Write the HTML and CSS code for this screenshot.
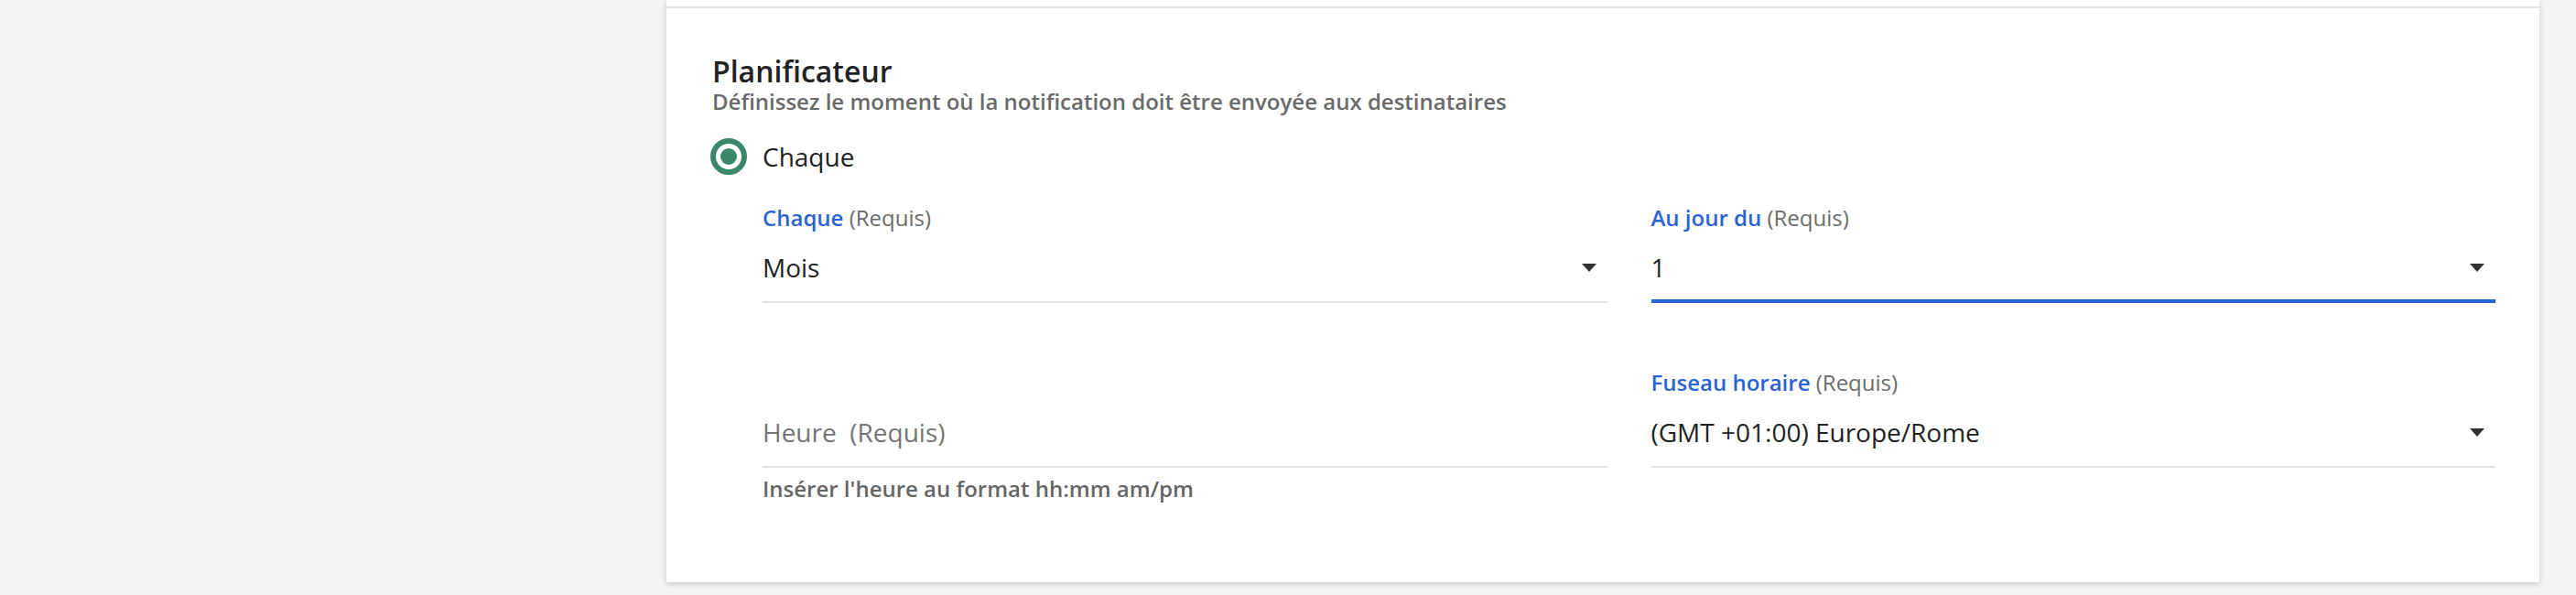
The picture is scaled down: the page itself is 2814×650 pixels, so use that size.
FILE: index.html
```html
<!DOCTYPE html>
<html lang="fr">
<head>
<meta charset="utf-8">
<title>Planificateur</title>
<link rel="stylesheet" href="styles.css">
</head>
<body>
<div class="page">
  <div class="card">
    <div class="card-prev"></div>
    <section class="section">
      <h2 class="title">Planificateur</h2>
      <p class="subtitle">Définissez le moment où la notification doit être envoyée aux destinataires</p>
      <div class="radio-row">
        <span class="radio"><span class="radio-dot"></span></span>
        <span class="radio-label">Chaque</span>
      </div>
      <div class="fields">
        <div class="field">
          <div class="label"><span class="label-name">Chaque</span> <span class="label-req">(Requis)</span></div>
          <div class="input">
            <span class="value">Mois</span>
            <svg class="caret" width="16" height="9" viewBox="0 0 16 9"><path d="M0 0H16L8 9Z" fill="#333"/></svg>
          </div>
        </div>
        <div class="field">
          <div class="label"><span class="label-name">Au jour du</span> <span class="label-req">(Requis)</span></div>
          <div class="input input--focus">
            <span class="value">1</span>
            <svg class="caret" width="16" height="9" viewBox="0 0 16 9"><path d="M0 0H16L8 9Z" fill="#333"/></svg>
          </div>
        </div>
        <div class="field">
          <div class="label label--empty"></div>
          <div class="input">
            <span class="value value--placeholder">Heure&nbsp; (Requis)</span>
          </div>
          <div class="helper">Insérer l'heure au format hh:mm am/pm</div>
        </div>
        <div class="field">
          <div class="label"><span class="label-name">Fuseau horaire</span> <span class="label-req">(Requis)</span></div>
          <div class="input">
            <span class="value">(GMT +01:00) Europe/Rome</span>
            <svg class="caret" width="16" height="9" viewBox="0 0 16 9"><path d="M0 0H16L8 9Z" fill="#333"/></svg>
          </div>
        </div>
      </div>
    </section>
  </div>
</div>
</body>
</html>
```

FILE: styles.css
```css
* { box-sizing: border-box; }
html, body { margin: 0; padding: 0; }
body {
  background: #f4f4f4;
  font-family: "Open Sans", "Noto Sans", sans-serif;
  color: #222;
  height: 650px;
  overflow: hidden;
}
.page { padding-left: 728px; }
.card {
  width: 2046px;
  background: #fff;
  box-shadow: 0 2px 6px rgba(0,0,0,0.18);
}
.card-prev { height: 7px; }
.section {
  border-top: 2px solid #e4e4e4;
  padding: 49px 48px 89px 50px;
}
.title {
  margin: 0;
  font-size: 32px;
  line-height: 40px;
  font-weight: 600;
  color: #222;
}
.subtitle {
  margin: 0;
  font-size: 24px;
  line-height: 26px;
  font-weight: 600;
  color: #6a6a6a;
}
.radio-row {
  margin-top: 27px;
  height: 40px;
  display: flex;
  align-items: center;
  margin-left: -2px;
}
.radio {
  width: 40px;
  height: 40px;
  border-radius: 50%;
  border: 6px solid #3b8868;
  display: flex;
  align-items: center;
  justify-content: center;
}
.radio-dot {
  width: 18px;
  height: 18px;
  border-radius: 50%;
  background: #3b8868;
}
.radio-label {
  margin-left: 17px;
  font-size: 28px;
  line-height: 40px;
  color: #222;
}
.fields {
  margin-top: 31px;
  margin-left: 55px;
  display: grid;
  grid-template-columns: 1fr 1fr;
  column-gap: 48px;
  row-gap: 71px;
}
.field { display: flex; flex-direction: column; }
.label {
  height: 32px;
  font-size: 24px;
  line-height: 32px;
  white-space: nowrap;
}
.label-name { color: #2a63d4; font-weight: 600; }
.label-req { color: #6b6b6b; }
.input {
  display: flex;
  align-items: center;
  justify-content: space-between;
  padding: 18px 12px 17px 0;
  border-bottom: 2px solid #e2e2e2;
}
.input--focus {
  padding-bottom: 15px;
  border-bottom: 4px solid #2a63d4;
}
.value {
  font-size: 28px;
  line-height: 40px;
  color: #222;
}
.value--placeholder { color: #757575; }
.caret { display: block; }
.helper {
  margin-top: 10px;
  font-size: 24px;
  line-height: 26px;
  font-weight: 600;
  color: #666;
}
```
